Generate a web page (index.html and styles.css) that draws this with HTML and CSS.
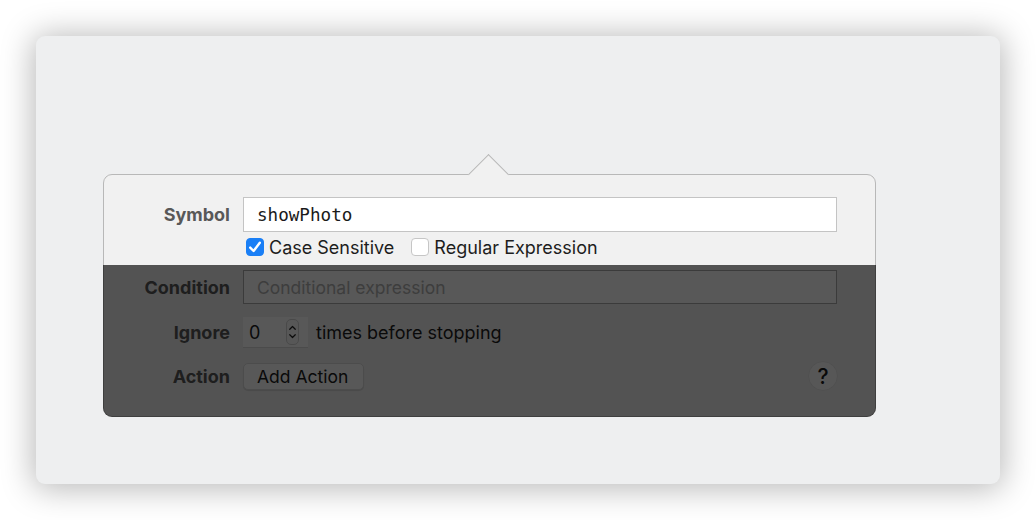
FILE: index.html
```html
<!DOCTYPE html>
<html lang="en">
<head>
<meta charset="utf-8">
<title>Breakpoint</title>
<link rel="stylesheet" href="styles.css">
</head>
<body>
<div class="panel">
  <div class="popover">
    <div class="section top">
      <div class="label">Symbol</div>
      <div class="field symbol-field">showPhoto</div>
      <div></div>
      <div class="options">
        <span class="check checked"><svg viewBox="0 0 18 18" width="18" height="18"><path d="M4.2 9.6 L7.6 13 L13.8 4.8" fill="none" stroke="#fff" stroke-width="2.4" stroke-linecap="round" stroke-linejoin="round"/></svg></span>
        <span class="opt-text">Case Sensitive</span>
        <span class="check"></span>
        <span class="opt-text">Regular Expression</span>
      </div>
    </div>
    <div class="section bottom">
      <div class="label">Condition</div>
      <div class="field cond-field">Conditional expression</div>
      <div class="label">Ignore</div>
      <div class="ignore-row">
        <div class="stepper">
          <span class="num">0</span>
          <span class="arrows"><svg viewBox="0 0 12 24" width="12" height="24"><path d="M3 9 L6 6 L9 9 M3 15 L6 18 L9 15" fill="none" stroke="#222" stroke-width="1.3" stroke-linecap="round" stroke-linejoin="round"/></svg></span>
        </div>
        <span class="times">times before stopping</span>
      </div>
      <div class="label">Action</div>
      <div class="action-row">
        <span class="btn">Add Action</span>
        <span class="help">?</span>
      </div>
    </div>
  </div>
</div>
</body>
</html>
```

FILE: styles.css
```css
html, body {
  margin: 0;
  padding: 0;
  background: #ffffff;
}
body {
  padding: 36px;
  font-family: Inter, "Liberation Sans", sans-serif;
}
.panel {
  width: 964px;
  height: 448px;
  box-sizing: border-box;
  background: #eeeff0;
  border-radius: 9px;
  box-shadow: 0 2px 32px 3px rgba(0, 0, 0, 0.28);
  padding: 138px 0 0 67px;
}
.popover {
  position: relative;
  width: 773px;
  box-sizing: border-box;
  border: 1px solid #b8b8b8;
  border-radius: 9px;
  background: #f1f1f1;
}
.popover::before {
  content: "";
  position: absolute;
  left: 370px;
  top: -15px;
  width: 28px;
  height: 28px;
  background: #f1f1f1;
  border-top: 1px solid #b8b8b8;
  border-left: 1px solid #b8b8b8;
  transform: rotate(45deg);
}
.section {
  position: relative;
  display: grid;
  grid-template-columns: 126px 594px;
  column-gap: 13px;
  align-items: center;
}
.top {
  padding: 22px 0 8px;
  row-gap: 5px;
  border-radius: 9px 9px 0 0;
}
.bottom {
  padding: 5px 0 25px;
  row-gap: 13px;
  border-radius: 0 0 9px 9px;
}
.bottom::after {
  content: "";
  position: absolute;
  left: -1px;
  right: -1px;
  top: 0;
  bottom: -1px;
  background: rgba(0, 0, 0, 0.655);
  border-radius: 0 0 9px 9px;
}
.label {
  text-align: right;
  font-weight: 700;
  font-size: 18px;
  color: #585858;
}
.field {
  height: 35px;
  box-sizing: border-box;
  border: 1px solid #c4c4c4;
  background: #ffffff;
  display: flex;
  align-items: center;
  padding-left: 13px;
}
.symbol-field {
  font-family: "DejaVu Sans Mono", "Liberation Mono", monospace;
  font-size: 17.6px;
  color: #1a1a1a;
}
.cond-field {
  height: 34px;
  font-size: 17.5px;
  color: #b2b2b2;
  border-color: #aaaaaa;
}
.options {
  display: flex;
  align-items: center;
  height: 20px;
  font-size: 18px;
  color: #1d1d1d;
}
.check {
  width: 18px;
  height: 18px;
  box-sizing: border-box;
  border-radius: 4px;
  border: 1px solid #c6c6c6;
  background: #fff;
  display: inline-flex;
  margin-left: 3px;
  margin-right: 5px;
}
.check.checked {
  background: #1a7ff6;
  border-color: #1a7ff6;
}
.check.checked svg {
  margin: -1px;
}
.opt-text {
  margin-right: 14px;
}
.ignore-row {
  display: flex;
  align-items: center;
  gap: 8px;
  font-size: 18px;
  color: #1d1d1d;
}
.stepper {
  width: 65px;
  height: 31px;
  box-sizing: border-box;
  background: #ffffff;
  border-bottom: 1px solid #d8d8d8;
  display: flex;
  align-items: center;
  justify-content: space-between;
  padding: 0 9px 0 6px;
}
.num {
  font-size: 18px;
  color: #1d1d1d;
}
.arrows {
  width: 13px;
  height: 26px;
  box-sizing: border-box;
  border: 1px solid #d4d4d4;
  border-radius: 5px;
  display: flex;
  align-items: center;
  justify-content: center;
  background: #fbfbfb;
}
.action-row {
  display: flex;
  align-items: center;
  justify-content: space-between;
}
.btn {
  height: 27px;
  box-sizing: border-box;
  padding: 0 15px 0 13px;
  display: inline-flex;
  align-items: center;
  font-size: 17.5px;
  color: #1d1d1d;
  background: #ffffff;
  border: 1px solid #dcdcdc;
  border-radius: 5px;
  box-shadow: 0 1px 1px rgba(0, 0, 0, 0.12);
}
.help {
  width: 30px;
  height: 30px;
  border-radius: 50%;
  background: #fbfbfb;
  border: 1px solid #e6e6e6;
  box-sizing: border-box;
  display: inline-flex;
  align-items: center;
  justify-content: center;
  font-size: 21px;
  font-weight: 500;
  color: #1a1a1a;
  margin-right: -1px;
}
```
